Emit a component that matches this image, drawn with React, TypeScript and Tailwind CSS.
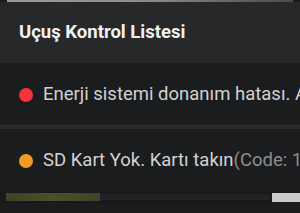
export default function App() {
  const items = [
    { color: 'bg-[#f5333f]', text: 'Enerji sistemi donanım hatası. ', extra: 'Arızayı kontrol edin' },
    { color: 'bg-[#f39a26]', text: 'SD Kart Yok. Kartı takın', extra: '(Code: 1)' },
  ];

  return (
    <div className="h-[213px] w-[300px] overflow-hidden bg-[#1b1c1e] font-['Roboto',sans-serif]">
      <div className="mx-[7px] h-[2px] bg-gradient-to-r from-[#9a9b9d] via-[#8a8b8d] to-[#4a4b4d]" />
      <div className="flex h-[61px] items-center bg-[#27282a] px-[19px]">
        <span className="text-[18.5px] font-bold text-[#f2f2f2]">Uçuş Kontrol Listesi</span>
      </div>
      {items.map((it, i) => (
        <div key={i}>
          <div className="flex h-[62px] items-center gap-[10px] overflow-hidden whitespace-nowrap pl-[19px] pt-[2px]">
            <span className={`h-[14px] w-[14px] shrink-0 rounded-full ${it.color}`} />
            <span className="text-[18.5px] text-[#d2d2d3]">
              {it.text}
              <span className={i === 0 ? 'text-[#d2d2d3]' : 'text-[#8d8e90]'}>{it.extra}</span>
            </span>
          </div>
          {i === 0 && <div className="h-[4px] bg-[#2b2c2e]" />}
        </div>
      ))}
      <div className="flex h-[12px] items-center bg-[#18191a]">
        <div className="ml-[6px] h-[8px] w-[94px] bg-gradient-to-r from-[#3c4327] via-[#4a5228] to-[#3e4426]" />
        <div className="h-[6px] w-[170px] bg-[#222325]" />
        <div className="flex-1" />
        <div className="h-[9px] w-[28px] bg-[#c9cacc]" />
      </div>
    </div>
  );
}
